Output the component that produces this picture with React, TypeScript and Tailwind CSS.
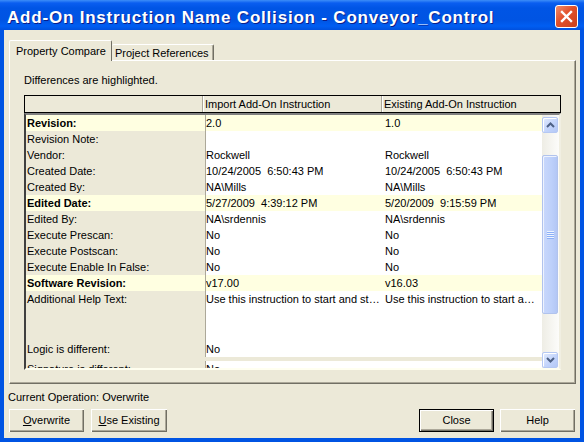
import React from 'react';

type Row = {
  label: string;
  imp: string;
  ext: string;
  hl?: boolean;
  tall?: boolean;
  last?: boolean;
};

const rows: Row[] = [
  { label: 'Revision:', imp: '2.0', ext: '1.0', hl: true },
  { label: 'Revision Note:', imp: '', ext: '' },
  { label: 'Vendor:', imp: 'Rockwell', ext: 'Rockwell' },
  { label: 'Created Date:', imp: '10/24/2005  6:50:43 PM', ext: '10/24/2005  6:50:43 PM' },
  { label: 'Created By:', imp: 'NA\\Mills', ext: 'NA\\Mills' },
  { label: 'Edited Date:', imp: '5/27/2009  4:39:12 PM', ext: '5/20/2009  9:15:59 PM', hl: true },
  { label: 'Edited By:', imp: 'NA\\srdennis', ext: 'NA\\srdennis' },
  { label: 'Execute Prescan:', imp: 'No', ext: 'No' },
  { label: 'Execute Postscan:', imp: 'No', ext: 'No' },
  { label: 'Execute Enable In False:', imp: 'No', ext: 'No' },
  { label: 'Software Revision:', imp: 'v17.00', ext: 'v16.03', hl: true },
  {
    label: 'Additional Help Text:',
    imp: 'Use this instruction to start and st\u2026',
    ext: 'Use this instruction to start a\u2026',
    tall: true,
  },
  { label: 'Logic is different:', imp: 'No', ext: '' },
  { label: 'Signature is different:', imp: 'No', ext: '', last: true },
];

const Chevron = ({ up }: { up?: boolean }) => (
  <svg width="9" height="6" viewBox="0 0 9 6" className={up ? '' : 'rotate-180'}>
    <path d="M1 5 L4.5 1.5 L8 5" fill="none" stroke="#4d6185" strokeWidth="2" />
  </svg>
);

const ScrollButton = ({ up }: { up?: boolean }) => (
  <div className="h-[16px] w-[16px] flex items-center justify-center rounded-[2px] border border-[#b5c8f3] bg-[linear-gradient(135deg,#e2ebfd,#c1d3fb_60%,#b4c8f6)] shadow-[inset_1px_1px_0_#fff]">
    <Chevron up={up} />
  </div>
);

const Scrollbar = () => (
  <div className="w-[17px] pr-[1px] flex flex-col bg-[linear-gradient(to_right,#eeede5,#fcfcfa)]">
    <div className="h-[2px]" />
    <ScrollButton up />
    <div className="h-[22px]" />
    <div className="h-[159px] w-[16px] rounded-[2px] border border-[#b1c3ed] bg-[linear-gradient(to_right,#c9d8fc,#bdd0fa_60%,#b3c7f5)] shadow-[inset_1px_1px_0_#eef3fe] flex flex-col items-center justify-center gap-[1px]">
      {[0, 1, 2, 3].map((i) => (
        <div key={i} className="w-[7px] h-[1px] bg-[#eef4fe] shadow-[0_1px_0_#8cb0f8]" />
      ))}
    </div>
    <div className="flex-1" />
    <ScrollButton />
  </div>
);

const XpButton = ({
  children,
  def,
  wide,
}: {
  children: React.ReactNode;
  def?: boolean;
  wide?: boolean;
}) => (
  <button
    className={`h-[23px] ${wide ? 'w-[76px]' : 'w-[75px]'} bg-[#ece9d8] text-black text-[11px] ${
      def
        ? 'border border-black shadow-[inset_1px_1px_0_#fff,inset_-1px_-1px_0_#716f64,inset_-2px_-2px_0_#aca899]'
        : 'shadow-[inset_1px_1px_0_#fff,inset_-1px_-1px_0_#716f64,inset_-2px_-2px_0_#aca899]'
    }`}
  >
    {children}
  </button>
);

export default function App() {
  return (
    <div className="w-[584px] h-[442px] flex flex-col bg-[#0054e3] font-['Liberation_Sans',Arial,sans-serif] text-[11px] text-black overflow-hidden">
      {/* title bar */}
      <div className="h-[30px] flex justify-between bg-[linear-gradient(to_bottom,#3d8ef8_0px,#0a5ef0_3px,#0055e5_8px,#0054e3_20px,#005ef2_26px,#0050de_30px)]">
        <div className="pl-[7px] pt-[6px] h-full flex items-center text-white font-bold text-[17px] tracking-[0.8px] whitespace-nowrap [text-shadow:1px_1px_0_#0a1e8a]">
          Add-On Instruction Name Collision - Conveyor_Control
        </div>
        <div className="mt-[5px] mr-[6px] w-[23px] h-[23px] rounded-[3px] border border-white bg-[linear-gradient(135deg,#f08d6c,#e2502b_45%,#c9401c)] flex items-center justify-center">
          <svg width="13" height="13" viewBox="0 0 13 13">
            <path d="M2 2 L11 11 M11 2 L2 11" stroke="#fff" strokeWidth="2.4" strokeLinecap="square" />
          </svg>
        </div>
      </div>

      {/* client */}
      <div className="flex-1 mx-[4px] mb-[4px] bg-[#ece9d8] flex flex-col">
        {/* tabs */}
        <div className="mt-[10px] ml-[5px] h-[21px] flex items-end">
          <div className="relative z-10 h-[21px] w-[103px] pl-[6px] leading-[20px] bg-[#ece9d8] border-t border-l border-white border-r border-r-[#716f64] rounded-t-[2px] whitespace-nowrap">
            Property Compare
          </div>
          <div className="h-[17px] w-[102px] pl-[3px] leading-[17px] border-t border-white border-r border-r-[#716f64] shadow-[inset_-1px_0_0_#aca899] rounded-t-[2px] whitespace-nowrap">
            Project References
          </div>
        </div>

        {/* panel */}
        <div className="-mt-[1px] ml-[5px] w-[567px] h-[324px] border-t border-l border-white border-r border-b border-r-[#716f64] border-b-[#716f64] shadow-[inset_-1px_-1px_0_#aca899] pl-[14px] pr-[14px] pt-[13px]">
          <div className="leading-[13px]">Differences are highlighted.</div>

          {/* grid header */}
          <div className="mt-[8px] h-[18px] border border-black flex leading-[16px] whitespace-nowrap">
            <div className="w-[178px] border-r border-[#aca899]" />
            <div className="w-[179px] border-l border-white border-r border-r-[#aca899] pl-[1px]">
              Import Add-On Instruction
            </div>
            <div className="flex-1 border-l border-white pl-[1px]">Existing Add-On Instruction</div>
          </div>

          {/* grid body */}
          <div className="h-[257px] border-2 border-l-[#404040] border-t-[#808080] border-r-[#f1efe2] border-b-[#fffff0] flex">
            <div className="flex-1 overflow-hidden">
              {rows.map((r) => {
                const bgLabel = r.hl ? 'bg-[#ffffe1]' : 'bg-[#ece9d8]';
                const bgVal = r.hl ? 'bg-[#ffffe1]' : 'bg-white';
                return (
                  <div
                    key={r.label}
                    className={`flex whitespace-pre leading-[16px] ${
                      r.tall ? 'h-[50px]' : r.last ? 'h-[20px] pt-[4px]' : 'h-[16px]'
                    }`}
                  >
                    <div
                      className={`w-[180px] pl-[1px] border-r border-[#aca899] ${bgLabel} ${
                        r.hl ? 'font-bold' : ''
                      }`}
                    >
                      {r.label}
                    </div>
                    <div className={`w-[178px] overflow-hidden ${bgVal}`}>{r.imp}</div>
                    <div className={`flex-1 pl-[1px] overflow-hidden ${bgVal}`}>{r.ext}</div>
                  </div>
                );
              })}
            </div>
            <Scrollbar />
          </div>
        </div>

        {/* status */}
        <div className="mt-[7px] ml-[4px] leading-[13px]">Current Operation: Overwrite</div>

        {/* buttons */}
        <div className="mt-[5px] mx-[5px] flex justify-between">
          <div className="flex gap-[7px]">
            <XpButton>
              <span className="underline">O</span>verwrite
            </XpButton>
            <XpButton wide>
              <span className="underline">U</span>se Existing
            </XpButton>
          </div>
          <div className="flex gap-[6px]">
            <XpButton def>Close</XpButton>
            <XpButton>Help</XpButton>
          </div>
        </div>
      </div>
    </div>
  );
}
